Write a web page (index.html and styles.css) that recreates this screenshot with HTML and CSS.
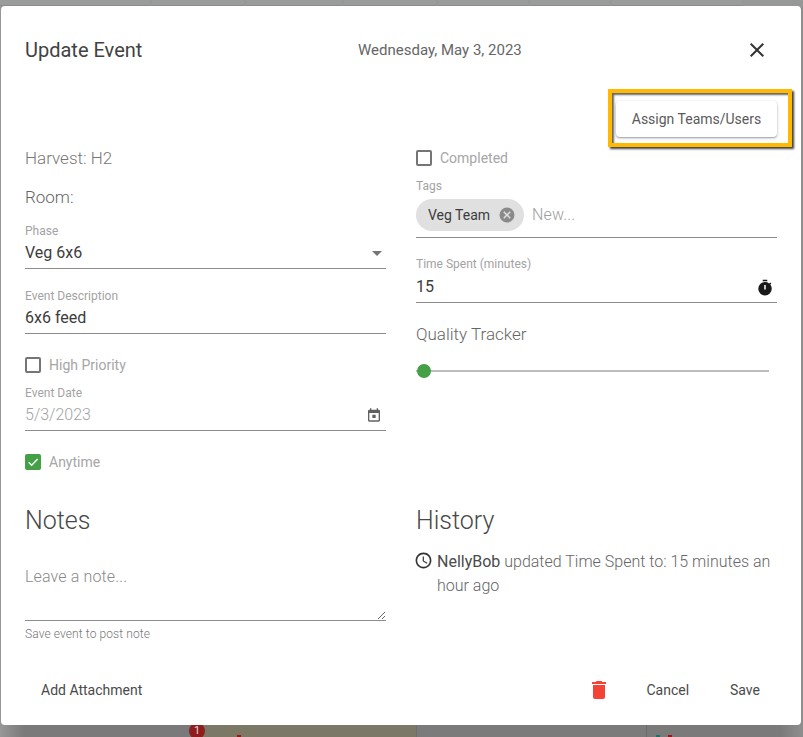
FILE: index.html
```html
<!DOCTYPE html>
<html lang="en">
<head>
<meta charset="utf-8">
<title>Update Event</title>
<link rel="stylesheet" href="styles.css">
</head>
<body>
<div class="backdrop">
  <div class="bg-tabs"><span></span><span></span><span></span><span></span><span></span><span></span><span></span></div>
  <div class="bg-card bg-card-a"></div>
  <div class="bg-card bg-card-b"></div>
  <span class="bg-badge">1</span>
  <span class="bg-tick bg-tick-red"></span>
  <span class="bg-tick bg-tick-teal"></span>
  <span class="bg-tick bg-tick-red2"></span>
</div>
<main class="dialog">
  <header class="head">
    <h1 class="title">Update Event</h1>
    <span class="date">Wednesday, May 3, 2023</span>
    <svg class="close" viewBox="0 0 24 24" width="24" height="24"><path d="M19 6.41 17.59 5 12 10.59 6.41 5 5 6.41 10.59 12 5 17.59 6.41 19 12 13.41 17.59 19 19 17.59 13.41 12z"/></svg>
  </header>
  <div class="assign-row">
    <button class="assign">Assign Teams/Users</button>
    <div class="highlight"></div>
  </div>
  <section class="columns">
    <div class="col">
      <div class="line harvest">Harvest: H2</div>
      <div class="line room">Room:</div>
      <div class="field phase">
        <label class="label">Phase</label>
        <div class="value">Veg 6x6<svg class="caret" viewBox="0 0 24 24" width="24" height="24"><path d="M7 10l5 5 5-5z"/></svg></div>
      </div>
      <div class="field gap20">
        <label class="label">Event Description</label>
        <div class="value">6x6 feed</div>
      </div>
      <div class="check gap19"><span class="box"></span><span>High Priority</span></div>
      <div class="field gap9">
        <label class="label">Event Date</label>
        <div class="value disabled">5/3/2023<svg class="cal" viewBox="0 0 24 24" width="16" height="16"><path d="M14.5 11.5h-5v5h5zM16 2v2H8V2H6v2H5a2 2 0 0 0-2 2v14c0 1.1.9 2 2 2h14a2 2 0 0 0 2-2V6a2 2 0 0 0-2-2h-1V2zm3 18H5V9h14z"/></svg></div>
      </div>
      <div class="check gap19"><span class="box on"><svg viewBox="0 0 24 24" width="16" height="16"><path d="M5.5 12.5l4.5 4.5L19 7.5" fill="none" stroke="#fff" stroke-width="2"/></svg></span><span>Anytime</span></div>
    </div>
    <div class="col">
      <div class="check"><span class="box"></span><span>Completed</span></div>
      <div class="field gap9">
        <label class="label">Tags</label>
        <div class="tags">
          <span class="chip">Veg Team<svg class="chip-x" viewBox="0 0 24 24" width="18" height="18"><path d="M12 2a10 10 0 1 0 0 20 10 10 0 0 0 0-20zm5 13.59L15.59 17 12 13.41 8.41 17 7 15.59 10.59 12 7 8.41 8.41 7 12 10.59 15.59 7 17 8.41 13.41 12z"/></svg></span>
          <span class="new">New...</span>
        </div>
      </div>
      <div class="field gap19 spent">
        <label class="label">Time Spent (minutes)</label>
        <div class="value">15<svg class="timer" viewBox="0 0 24 24" width="18" height="18"><path d="M15 1H9v2h6zm4.03 6.39 1.42-1.42c-.43-.51-.9-.99-1.41-1.41l-1.42 1.42A9 9 0 0 0 12 4a9 9 0 0 0-9 9 9 9 0 0 0 18 0c0-2.12-.74-4.07-1.97-5.61zM13 14h-2V8h2z"/></svg></div>
      </div>
      <div class="line quality">Quality Tracker</div>
      <div class="slider"><span class="thumb"></span></div>
    </div>
    <div class="col">
      <h2 class="section">Notes</h2>
      <textarea class="note" placeholder="Leave a note..."></textarea>
      <p class="helper">Save event to post note</p>
    </div>
    <div class="col">
      <h2 class="section">History</h2>
      <div class="history">
        <svg class="clock" viewBox="0 0 24 24" width="19" height="19"><path d="M11.99 2C6.47 2 2 6.48 2 12s4.47 10 9.99 10C17.52 22 22 17.52 22 12S17.52 2 11.99 2zM12 20a8 8 0 1 1 0-16 8 8 0 0 1 0 16zm.5-13H11v6l5.25 3.15.75-1.23-4.5-2.67z"/></svg>
        <p class="history-text"><span class="who">NellyBob</span> updated Time Spent to: 15 minutes an hour ago</p>
      </div>
    </div>
  </section>
  <footer class="foot">
    <button class="text-btn">Add Attachment</button>
    <div class="foot-right">
      <svg class="trash" viewBox="0 0 24 24" width="24" height="24"><path d="M6 19c0 1.1.9 2 2 2h8a2 2 0 0 0 2-2V7H6zM19 4h-3.5l-1-1h-5l-1 1H5v2h14z"/></svg>
      <button class="text-btn cancel">Cancel</button>
      <button class="text-btn save">Save</button>
    </div>
  </footer>
</main>
</body>
</html>
```
FILE: styles.css
```css
* { box-sizing: border-box; }
html, body { margin: 0; height: 737px; overflow: hidden; }
body {
  background: #8f8f8f;
  font-family: Roboto, "Liberation Sans", sans-serif;
  color: #333;
  padding: 6px 0 0 1px;
}
.backdrop {
  position: absolute; left: 0; top: 0; width: 803px; height: 737px; overflow: hidden;
  background: linear-gradient(90deg, #979797 0, #7a7a7a 24px, #7a7a7a 780px, #8e8e8e 803px);
}
.bg-tabs { position: absolute; left: 0; top: 0; width: 803px; height: 7px; display: flex; gap: 2px; background: #969898; }
.bg-tabs span { height: 6px; background: #9a9c9c; border-bottom: 1px solid #8a8c8c; }
.bg-tabs span:nth-child(1) { width: 150px; }
.bg-tabs span:nth-child(2) { width: 92px; }
.bg-tabs span:nth-child(3) { width: 96px; }
.bg-tabs span:nth-child(4) { width: 92px; }
.bg-tabs span:nth-child(5) { width: 90px; }
.bg-tabs span:nth-child(6) { width: 80px; }
.bg-tabs span:nth-child(7) { width: 130px; }
.bg-card { position: absolute; top: 725px; height: 12px; }
.bg-card-a { left: 197px; width: 220px; background: #7c7866; border-right: 1px solid #6e6e6e; }
.bg-card-b { left: 417px; width: 230px; background: #7b7b7b; border-right: 1px solid #6c6c6c; }
.bg-badge {
  position: absolute; left: 189px; top: 723px; width: 16px; height: 16px;
  border-radius: 50%; background: #8f1d1d; color: #ddd; font-size: 11px; line-height: 16px; text-align: center;
}
.bg-tick { position: absolute; top: 735px; width: 4px; height: 2px; }
.bg-tick-red { left: 237px; background: #a01414; }
.bg-tick-teal { left: 656px; background: #1f6f68; }
.bg-tick-red2 { left: 668px; background: #a01414; }
.dialog {
  position: relative;
  width: 800px; height: 719px;
  background: #fff; border-radius: 4px;
  padding: 0 24px;
}
.head { position: relative; height: 88px; display: flex; align-items: center; }
.title { margin: 0; font-size: 20px; font-weight: 400; line-height: 28px; color: #424242; }
.date { position: absolute; left: 333px; top: 34px; font-size: 15px; line-height: 20px; color: #666; }
.close { position: absolute; left: 720px; top: 32px; fill: #333; }
.assign-row { position: relative; height: 52px; display: flex; justify-content: flex-end; padding-top: 7px; }
.assign {
  width: 161px; height: 36px; border: 0; background: #fff; border-radius: 4px;
  font: 400 14px/36px Roboto, sans-serif; color: #5a5a5a; padding: 0;
  box-shadow: 0 1px 3px rgba(0,0,0,.3), 0 1px 1px rgba(0,0,0,.15);
}
.highlight {
  position: absolute; left: 583px; top: -5px; width: 184px; height: 58px;
  border: 4px solid #ffb900;
  box-shadow: 2px 2px 2px rgba(0,0,0,.75), inset 2px 2px 2px rgba(0,0,0,.6);
}
.columns { display: grid; grid-template-columns: 361px 361px; column-gap: 30px; grid-template-rows: 328px auto; row-gap: 30px; }
.col { min-width: 0; }
.line { font-size: 17px; line-height: 24px; font-weight: 300; color: #666; }
.harvest { color: #777; }
.room { margin-top: 15px; }
.phase { margin-top: 15px; }
.field { display: block; }
.gap20 { margin-top: 20px; }
.gap19 { margin-top: 19px; }
.gap9 { margin-top: 9px; }
.label { display: block; font-size: 12px; line-height: 14px; color: #a3a3a3; }
.value {
  position: relative; margin-top: 3px; padding-bottom: 3px; height: 24px; line-height: 24px; font-size: 16px;
  color: #3c3c3c; border-bottom: 1px solid #8c8c8c; box-sizing: content-box;
}
.spent .value { margin-top: 4px; }
.disabled { color: #a3a3a3; font-weight: 300; }
.caret { position: absolute; right: -3px; top: 0; fill: #757575; }
.cal { position: absolute; right: 4px; top: 4px; fill: #616161; }
.timer { position: absolute; right: 3px; top: 4px; fill: #1a1a1a; }
.check { display: flex; align-items: center; height: 24px; font-size: 14px; color: #a6a6a6; gap: 8px; }
.box { width: 16px; height: 16px; border: 2px solid #757575; border-radius: 2px; flex: none; display: block; position: relative; }
.box.on { background: #43a047; border: 0; }
.box.on svg { display: block; }
.tags { display: flex; align-items: flex-start; margin-top: 6px; height: 39px; border-bottom: 1px solid #8c8c8c; gap: 8px; }
.chip {
  display: inline-flex; align-items: center; height: 32px; width: 108px; padding-left: 12px; border-radius: 16px; background: #e0e0e0;
  font-size: 14px; color: #3c3c3c; gap: 8px;
}
.chip-x { fill: #8a8a8a; flex: none; }
.new { font-size: 16px; font-weight: 300; line-height: 32px; color: #9e9e9e; letter-spacing: .15px; }
.quality { margin-top: 19px; }
.slider { position: relative; width: 353px; height: 2px; margin-top: 24px; background: #bdbdbd; }
.thumb { position: absolute; left: 1px; top: -6px; width: 14px; height: 14px; border-radius: 50%; background: #43a047; }
.section { margin: 1px 0 0; font-size: 25px; font-weight: 300; line-height: 32px; color: #484848; }
.note {
  display: block; width: 100%; height: 84px; padding: 28px 0 0; border: 0; border-bottom: 1px solid #8c8c8c; outline: 0;
  font: 300 16px/24px Roboto, sans-serif; letter-spacing: .14px; color: #333; background: transparent; resize: vertical;
}
.note::placeholder { color: #8a8a8a; opacity: 1; }
.helper { margin: 6px 0 0; font-size: 12px; line-height: 14px; font-weight: 300; color: #777; letter-spacing: .1px; }
.history { display: flex; margin-top: 13px; }
.clock { flex: none; fill: #333; margin: 1px 4px 0 -2px; }
.history-text { margin: 0; font-size: 16px; line-height: 24px; font-weight: 300; color: #666; }
.who { font-weight: 400; color: #4a4a4a; }
.foot { position: absolute; left: 24px; right: 24px; top: 666px; height: 36px; display: flex; justify-content: space-between; align-items: center; }
.text-btn { border: 0; background: none; padding: 0; margin: 0; font: 400 14px/36px Roboto, sans-serif; color: #4a4a4a; }
.foot > .text-btn { margin-left: 16px; }
.foot-right { display: flex; align-items: center; }
.trash { fill: #f44336; margin-right: 35px; }
.cancel { margin-right: 41px; }
.save { margin-right: 17px; }
```
